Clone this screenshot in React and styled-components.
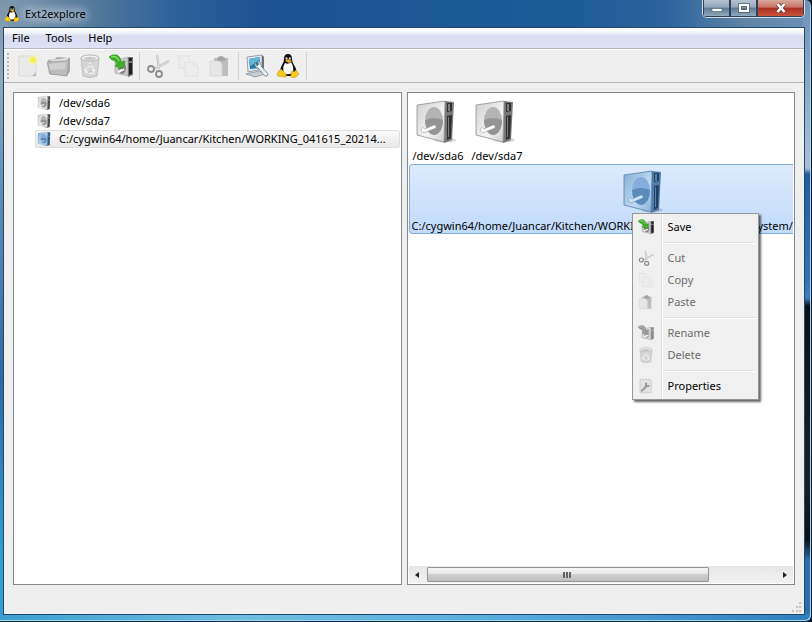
import React from "react";
import styled, { createGlobalStyle, css } from "styled-components";

const ROOT_PATH = "C:/cygwin64/home/Juancar/Kitchen/WORKING_041615_20214";

/* ---------- icons ---------- */

const Drive = ({ size = 48, blue = false }) => {
	const c = blue
		? { a: "#bcd9f3", b: "#86afd6", edge: "#5b82a6", side: "#4f7ba6", dark: "#1f4163", disc: "#5b8bba", low: "#84addb", arm: "#cfe4f8" }
		: { a: "#f4f4f4", b: "#cfcfcf", edge: "#8f8f8f", side: "#777", dark: "#2f2f2f", disc: "#949494", low: "#b4b4b4", arm: "#fff" };
	const id = blue ? "drive-blue" : "drive-grey";
	return (
		<svg width={size} height={size} viewBox="0 0 48 48" aria-hidden="true">
			<defs>
				<linearGradient id={id} x1="0" y1="0" x2="1" y2="1">
					<stop offset="0" stopColor={c.b} />
					<stop offset="0.6" stopColor={c.a} />
					<stop offset="1" stopColor={c.b} />
				</linearGradient>
			</defs>
			<ellipse cx="31" cy="42" rx="11" ry="2.5" fill="#000" opacity="0.15" />
			<path d="M31 3 L40 4 L38 42 L30 45 Z" fill={c.side} />
			<path d="M33 5 L38 5 L38 13 L33 14 Z M33 18 L38 17 L37 40 L33 42 Z" fill={c.dark} />
			<path d="M34 6h2v7h-2z M34 19h1v20h-1z" fill={c.low} opacity="0.6" />
			<path d="M3 7 L31 3 L30 44 L3 37 Z" fill={`url(#${id})`} stroke={c.edge} strokeWidth="0.8" />
			<ellipse cx="20" cy="23" rx="9" ry="14" fill={c.low} />
			<path d="M11 22 Q20 18 29 22 Q29 34 21 37 Q12 36 11 22Z" fill={c.disc} />
			<path d="M7 31 Q8 28 11 31 L20 27 Q23 27 22 30 L12 34 Q8 36 7 31 Z" fill={c.arm} stroke={c.edge} strokeWidth="0.5" />
		</svg>
	);
};

const NewFile = ({ size = 24 }) => (
	<svg width={size} height={size} viewBox="0 0 24 24" aria-hidden="true">
		<path d="M3 2h14l3 3v17H3z" fill="#e9e9e9" stroke="#d8d8d8" />
		<path d="M16 22l4-4v4z" fill="#bdbdbd" />
		<circle cx="17" cy="6" r="5" fill="#f7f3a0" opacity="0.7" />
		<circle cx="17" cy="6" r="3" fill="#f5ee5a" />
	</svg>
);

const Folder = ({ size = 24 }) => (
	<svg width={size} height={size} viewBox="0 0 24 24" aria-hidden="true">
		<path d="M1 6l7-1 2-2 13 1v13l-3 5-18-2z" fill="#a9a9a9" />
		<path d="M3 6l18-2v12l-2 4z" fill="#e3e3e3" />
		<path d="M0 8l19-1 3-2-2 17-17-2z" fill="#bcbcbc" stroke="#9a9a9a" strokeWidth="0.8" />
		<path d="M2 10l17-2-1 7-15 1z" fill="#d4d4d4" opacity="0.8" />
	</svg>
);

const Trash = ({ size = 24 }) => (
	<svg width={size} height={size} viewBox="0 0 24 24" aria-hidden="true">
		<path d="M3 4l2 18q7 3 14 0l2-18z" fill="#d6d6d6" stroke="#bebebe" />
		<ellipse cx="12" cy="4" rx="9" ry="3" fill="#f0f0f0" stroke="#b5b5b5" />
		<ellipse cx="12" cy="4.5" rx="6" ry="1.5" fill="#c4c4c4" />
		<path d="M9 14l3-4 3 4M16 15l-1 4h-4M9 19l-2-4" stroke="#f4f4f4" strokeWidth="2" fill="none" />
		<path d="M9 13l3-3 2 2M15 18h-4" stroke="#aaa" strokeWidth="0.7" fill="none" />
	</svg>
);

const SaveDrive = ({ size = 24, off = false }) => (
	<svg width={size} height={size} viewBox="0 0 24 24" aria-hidden="true">
		<path d="M6 7l13-4v19L6 19z" fill={off ? "#d6d6d6" : "#c9c9c9"} stroke="#aaa" strokeWidth="0.7" />
		<path d="M19 3h5v18l-5 2z" fill={off ? "#aaa" : "#777"} />
		<path d="M20 4h3v3h-3zM20 9h3v11l-3 1z" fill={off ? "#888" : "#1d1d1d"} />
		<ellipse cx="13" cy="14" rx="4" ry="6" fill={off ? "#b5b5b5" : "#888"} />
		<path d="M9 18l6-3" stroke="#fff" strokeWidth="2" />
		<path
			d="M0 3Q3 0 8 1Q12 3 12 8L16 7L14 15L6 12L8 10Q7 6 3 6Z"
			fill={off ? "#999" : "#3fae2a"}
			stroke={off ? "#888" : "#2a8a1c"}
			strokeWidth="0.6"
		/>
		<path d="M2 3Q8 1 10 7" stroke={off ? "#bbb" : "#8be36b"} fill="none" strokeWidth="1.3" />
	</svg>
);

const Scissors = ({ size = 24 }) => (
	<svg width={size} height={size} viewBox="0 0 24 24" fill="none" aria-hidden="true">
		<path d="M11 1L13 15M23 7L8 15" stroke="#b9b9b9" strokeWidth="2.2" />
		<path d="M11 1L13 15M23 7L8 15" stroke="#e4e4e4" strokeWidth="1" />
		<circle cx="5" cy="15" r="3" stroke="#8b8b8b" strokeWidth="1.8" />
		<circle cx="13" cy="20" r="3" stroke="#8b8b8b" strokeWidth="1.8" />
	</svg>
);

const CopyPages = ({ size = 24 }) => (
	<svg width={size} height={size} viewBox="0 0 24 24" fill="#ededed" stroke="#e0e0e0" aria-hidden="true">
		<path d="M2 2h10v12H2z" />
		<path d="M8 8h9l4 4v10H8z" />
		<path d="M17 8v4h4" />
	</svg>
);

const Clipboard = ({ size = 24 }) => (
	<svg width={size} height={size} viewBox="0 0 24 24" aria-hidden="true">
		<path d="M6 4h14v18H6z" fill="#bdbdbd" />
		<path d="M9 4q4-4 8 0v3H9z" fill="#a4a4a4" />
		<path d="M2 7h9l3 3v12H2z" fill="#e6e6e6" stroke="#d4d4d4" strokeWidth="0.8" />
	</svg>
);

const Computer = ({ size = 24 }) => (
	<svg width={size} height={size} viewBox="0 0 24 24" aria-hidden="true">
		<path d="M2 3l15-2v14L3 18z" fill="#e6ebef" stroke="#7e8b95" strokeWidth="0.8" />
		<path d="M4 5l11-2v11L5 15z" fill="#2379ad" />
		<path d="M4 5l11-2v3L5 12z" fill="#63b7dc" />
		<path d="M17 1l2 2v13l-2-1z" fill="#66727c" />
		<path d="M1 20l13-3 7 3-11 3z" fill="#c5ccd1" stroke="#838c93" strokeWidth="0.7" />
		<path
			d="M10 8q-1 5 3 6l7 8q3 1 3-2l-7-8q0-5-4-5l2 3-2 2z"
			fill="#f0f2f4"
			stroke="#707b84"
			strokeWidth="0.8"
		/>
	</svg>
);

const Tux = ({ size = 24 }) => (
	<svg width={size} height={size} viewBox="0 0 24 24" aria-hidden="true">
		<path d="M8 5Q8 0 12 0Q16 0 16 5Q16 8 18 11Q22 17 19 20L15 22H9L5 19Q3 16 6 11Q8 8 8 5Z" fill="#111" />
		<path d="M9 9Q12 11 15 8Q18 13 17 18Q13 22 8 19Q6 14 9 9Z" fill="#fafafa" />
		<ellipse cx="10.5" cy="4.5" rx="1" ry="1.3" fill="#ddd" />
		<ellipse cx="13.8" cy="4.5" rx="1" ry="1.3" fill="#ddd" />
		<path d="M9 7l3-2 4 2-3 2z" fill="#f0a815" />
		<path d="M5 15L10 20Q11 24 8 23L2 22Q0 21 2 18Z" fill="#f7cb1d" stroke="#b98508" strokeWidth="0.5" />
		<path d="M16 17Q18 19 20 16L23 20Q23 21 18 24Q14 24 15 20Z" fill="#f7cb1d" stroke="#b98508" strokeWidth="0.5" />
	</svg>
);

const Wrench = ({ size = 24 }) => (
	<svg width={size} height={size} viewBox="0 0 24 24" aria-hidden="true">
		<path d="M3 2h15l2 2v18H3z" fill="#e2e2e2" stroke="#c4c4c4" />
		<path d="M5 20l8-8M12 7v5h5" stroke="#999" strokeWidth="3" fill="none" />
	</svg>
);

/* ---------- data ---------- */

const tools = [
	[
		{ label: "New", Icon: NewFile },
		{ label: "Open", Icon: Folder },
		{ label: "Delete", Icon: Trash },
		{ label: "Save", Icon: SaveDrive },
	],
	[
		{ label: "Cut", Icon: Scissors },
		{ label: "Copy", Icon: CopyPages },
		{ label: "Paste", Icon: Clipboard },
	],
	[
		{ label: "Rescan system", Icon: Computer },
		{ label: "About", Icon: Tux },
	],
];

const menuGroups = [
	[{ label: "Save", Icon: SaveDrive }],
	[
		{ label: "Cut", Icon: Scissors, off: true },
		{ label: "Copy", Icon: CopyPages, off: true },
		{ label: "Paste", Icon: Clipboard, off: true },
	],
	[
		{ label: "Rename", Icon: SaveDrive, off: true },
		{ label: "Delete", Icon: Trash, off: true },
	],
	[{ label: "Properties", Icon: Wrench }],
];

const App = () => (
	<>
		<GlobalStyle />
		<Window>
			<TitleBar>
				<Tux size={16} />
				<Title>Ext2explore</Title>
				<Controls>
					<Control aria-label="Minimize">
						<svg width="12" height="12" viewBox="0 0 12 12">
							<path d="M1 6.5h10v3H1z" fill="#fff" stroke="#4a5a6c" strokeWidth="0.6" />
						</svg>
					</Control>
					<Control aria-label="Maximize">
						<svg width="12" height="12" viewBox="0 0 12 12">
							<path d="M2 3h8v6H2z" fill="none" stroke="#4a5a6c" strokeWidth="3.4" />
							<path d="M2 3h8v6H2z" fill="none" stroke="#fff" strokeWidth="2" />
						</svg>
					</Control>
					<Control aria-label="Close" $close>
						<svg width="12" height="12" viewBox="0 0 12 12">
							<path d="M2.5 2l7 8M9.5 2l-7 8" stroke="#5c3a3c" strokeWidth="4" />
							<path d="M2.5 2l7 8M9.5 2l-7 8" stroke="#fff" strokeWidth="2.6" />
						</svg>
					</Control>
				</Controls>
			</TitleBar>
			<Client>
				<MenuBar>
					<MenuButton>File</MenuButton>
					<MenuButton>Tools</MenuButton>
					<MenuButton>Help</MenuButton>
				</MenuBar>
				<ToolBar>
					<Grip />
					{tools.map((group, index) => (
						<ToolGroup key={index}>
							{group.map(({ label, Icon }) => (
								<ToolButton key={label} aria-label={label}>
									<Icon />
								</ToolButton>
							))}
						</ToolGroup>
					))}
				</ToolBar>
				<Panes>
					<Pane>
						<Tree>
							<TreeRow>
								<Drive size={16} />
								<span>/dev/sda6</span>
							</TreeRow>
							<TreeRow>
								<Drive size={16} />
								<span>/dev/sda7</span>
							</TreeRow>
							<TreeRow $selected>
								<Drive size={16} blue />
								<span>{ROOT_PATH}...</span>
							</TreeRow>
						</Tree>
					</Pane>
					<Pane>
						<IconView>
							<Volume>
								<Drive />
								<span>/dev/sda6</span>
							</Volume>
							<Volume>
								<Drive />
								<span>/dev/sda7</span>
							</Volume>
							<Volume $selected>
								<Drive blue />
								<span>{ROOT_PATH}143/system/</span>
							</Volume>
						</IconView>
						<ScrollBar>
							<ScrollArrow aria-label="Scroll left">
								<svg width="4" height="6" viewBox="0 0 4 6">
									<path d="M4 0v6L0 3z" fill="#222" />
								</svg>
							</ScrollArrow>
							<Track>
								<Thumb>
									<svg width="9" height="6" viewBox="0 0 9 6">
										<path d="M0 0h2v6H0zM3 0h2v6H3zM6 0h2v6H6z" fill="#666" />
									</svg>
								</Thumb>
							</Track>
							<ScrollArrow aria-label="Scroll right">
								<svg width="4" height="6" viewBox="0 0 4 6">
									<path d="M0 0v6l4-3z" fill="#222" />
								</svg>
							</ScrollArrow>
						</ScrollBar>
						<ContextMenu>
							{menuGroups.map((group, index) => (
								<MenuGroup key={index}>
									{group.map(({ label, Icon, off }) => (
										<MenuItem key={label} disabled={off}>
											<Icon size={16} off={off} />
											<span>{label}</span>
										</MenuItem>
									))}
								</MenuGroup>
							))}
						</ContextMenu>
					</Pane>
				</Panes>
				<StatusBar>
					<svg width="10" height="10" viewBox="0 0 10 10" aria-hidden="true">
						<path d="M7 0h2v2H7zM4 4h2v2H4zM7 4h2v2H7zM0 8h2v2H0zM4 8h2v2H4zM7 8h2v2H7z" fill="#c4c4c4" />
					</svg>
				</StatusBar>
			</Client>
		</Window>
	</>
);

export default App;

const GlobalStyle = createGlobalStyle`
	* {
		box-sizing: border-box;
	}

	body {
		margin: 0;
		background: #07121c;
		color: #000;
		font-family: "Noto Sans", "Open Sans", sans-serif;
		font-size: 11px;
		line-height: 16px;
	}

	button {
		border: 0;
		padding: 0;
		background: none;
		color: inherit;
		font: inherit;
	}

	svg {
		display: block;
		flex: none;
	}
`;

const Window = styled.div`
	min-height: 100vh;
	display: flex;
	flex-direction: column;
	padding: 0 6px 6px 3px;
	border-right: 1px solid #0b1a28;
	border-bottom: 1px solid #0b2a42;
	border-radius: 0 6px 6px 0;
	box-shadow: inset -1px -1px #a9d6f2;
	background:
		linear-gradient(90deg, #3a9fd0, #6fbde0 30%, #58aedd 60%, #2f7fc0) bottom / 100% 8px no-repeat,
		linear-gradient(#6c92b8, #a9c0d6 168px, #1f5f9f 174px, #2f75b5 280px, #3c80bd 298px, #0a1016 306px, #1a2024 480px, #0a1016 540px, #2b6fae 560px) right / 8px 100% no-repeat,
		linear-gradient(#7d95a8, #8fa9bb 80px, #5f8cb4 200px, #2d6aa5 380px, #2fa0d0 560px) left / 8px 100% no-repeat,
		linear-gradient(90deg, #7f9bb2, #52779a 12%, #2c609a 22%, #1b5394 32%, #1d5a98 70%, #2a639d 82%, #6085a6 92%, #6b90b5);
`;

const TitleBar = styled.header`
	display: flex;
	align-items: center;
	height: 27px;
	padding-left: 1px;
`;

const Title = styled.h1`
	margin: 0 auto 0 0;
	padding: 0 5px;
	font-size: 11px;
	font-weight: 400;
	text-shadow: 0 0 8px #fff, 0 0 12px #dfe9f2, 0 0 16px #c9dae8;
`;

const Controls = styled.div`
	display: flex;
	align-self: flex-start;
	height: 18px;
	border: 1px solid #d3dde6;
	border-top: 0;
	border-radius: 0 0 5px 5px;
	overflow: hidden;
`;

const Control = styled.button`
	display: flex;
	align-items: center;
	justify-content: center;
	width: ${(props) => (props.$close ? "47px" : "27px")};
	border: 1px solid #2f4257;
	border-top: 0;
	background: ${(props) =>
		props.$close
			? "linear-gradient(#d9a79c, #c97263 45%, #a92f20 50%, #c9543a)"
			: "linear-gradient(#b4c3d1, #93a7ba 45%, #5f7a94 50%, #8fa9c0)"};
`;

const Client = styled.main`
	flex: 1;
	display: flex;
	flex-direction: column;
	border: 1px solid #24486b;
	background: #efefef;
`;

const MenuBar = styled.nav`
	display: flex;
	height: 21px;
	border-bottom: 1px solid #b4b6bf;
	background: linear-gradient(#fff, #f1f3f9 25%, #d8dcee 40%, #dfe2f4);
`;

const MenuButton = styled.button`
	padding: 0 8px;
`;

const ToolBar = styled.div`
	display: flex;
	align-items: center;
	height: 34px;
	padding-left: 3px;
	border-top: 1px solid #fff;
	border-bottom: 1px solid #b5b5b5;
`;

const Grip = styled.div`
	width: 5px;
	height: 27px;
	background: radial-gradient(circle at 1px 1px, #b8b8b8 1px, transparent 1px) 0 0 / 5px 4px;
`;

const ToolGroup = styled.div`
	display: flex;
	align-items: center;
	padding-right: 3px;
	margin-right: 2px;
	border-right: 1px solid #d2d2d2;
`;

const ToolButton = styled.button`
	display: flex;
	align-items: center;
	justify-content: center;
	width: 31px;
	height: 28px;
`;

const Panes = styled.div`
	flex: 1;
	display: flex;
	gap: 5px;
	padding: 9px 9px 0;
`;

const Pane = styled.section`
	position: relative;
	flex: 1;
	min-width: 0;
	display: flex;
	flex-direction: column;
	padding: 1px;
	border: 1px solid #828790;
	background: #fff;
`;

const Tree = styled.ul`
	margin: 0;
	padding: 0 0 0 20px;
	list-style: none;
`;

const TreeRow = styled.li`
	display: flex;
	align-items: center;
	gap: 6px;
	height: 18px;
	padding-left: 1px;
	border: 1px solid transparent;
	border-radius: 2px;
	white-space: nowrap;
	${(props) =>
		props.$selected &&
		css`
			border-color: #dedede;
			background: linear-gradient(#fafafa, #e9e9e9);
		`}
`;

const IconView = styled.div`
	flex: 1;
	display: flex;
	flex-wrap: wrap;
	align-content: flex-start;
	overflow: hidden;
`;

const Volume = styled.div`
	flex: none;
	display: flex;
	flex-direction: column;
	align-items: center;
	gap: 2px;
	width: 59px;
	height: 70px;
	padding: 3px 2px 0;
	border: 1px solid transparent;
	border-radius: 3px;
	white-space: nowrap;
	${(props) =>
		props.$selected &&
		css`
			width: 472px;
			align-items: flex-start;
			border-color: #84acdd;
			background: linear-gradient(#dceafc, #c1dbfc);

			svg {
				align-self: center;
			}
		`}
`;

const ScrollBar = styled.div`
	display: flex;
	height: 17px;
	background: linear-gradient(#e6e6e6, #f2f2f2);
`;

const ScrollArrow = styled.button`
	display: flex;
	align-items: center;
	justify-content: center;
	width: 17px;
`;

const Track = styled.div`
	flex: 1;
	padding: 1px;
`;

const Thumb = styled.div`
	display: flex;
	align-items: center;
	justify-content: center;
	width: 81%;
	height: 15px;
	border: 1px solid #979797;
	border-radius: 1px;
	background: linear-gradient(#f5f5f5, #e6e6e6 45%, #cfcfcf 50%, #c0c0c0);
`;

const ContextMenu = styled.div`
	position: absolute;
	top: 120px;
	left: 224px;
	width: 127px;
	padding: 2px;
	border: 1px solid #979797;
	background: linear-gradient(90deg, transparent 28px, #e0e0e0 28px, #e0e0e0 29px, #fff 29px, #fff 30px, transparent 30px) #f0f0f0;
	box-shadow: 2px 2px 2px rgba(0, 0, 0, 0.6);
`;

const MenuGroup = styled.div`
	& + & {
		padding-top: 9px;
		background: linear-gradient(#e0e0e0, #e0e0e0) 28px 4px / 100% 1px no-repeat,
			linear-gradient(#fff, #fff) 28px 5px / 100% 1px no-repeat;
	}
`;

const MenuItem = styled.button`
	display: flex;
	align-items: center;
	gap: 14px;
	width: 100%;
	height: 22px;
	padding-left: 3px;
	color: ${(props) => (props.disabled ? "#6d6d6d" : "#000")};
`;

const StatusBar = styled.footer`
	display: flex;
	align-items: flex-end;
	justify-content: flex-end;
	height: 29px;
	padding: 2px;
`;
